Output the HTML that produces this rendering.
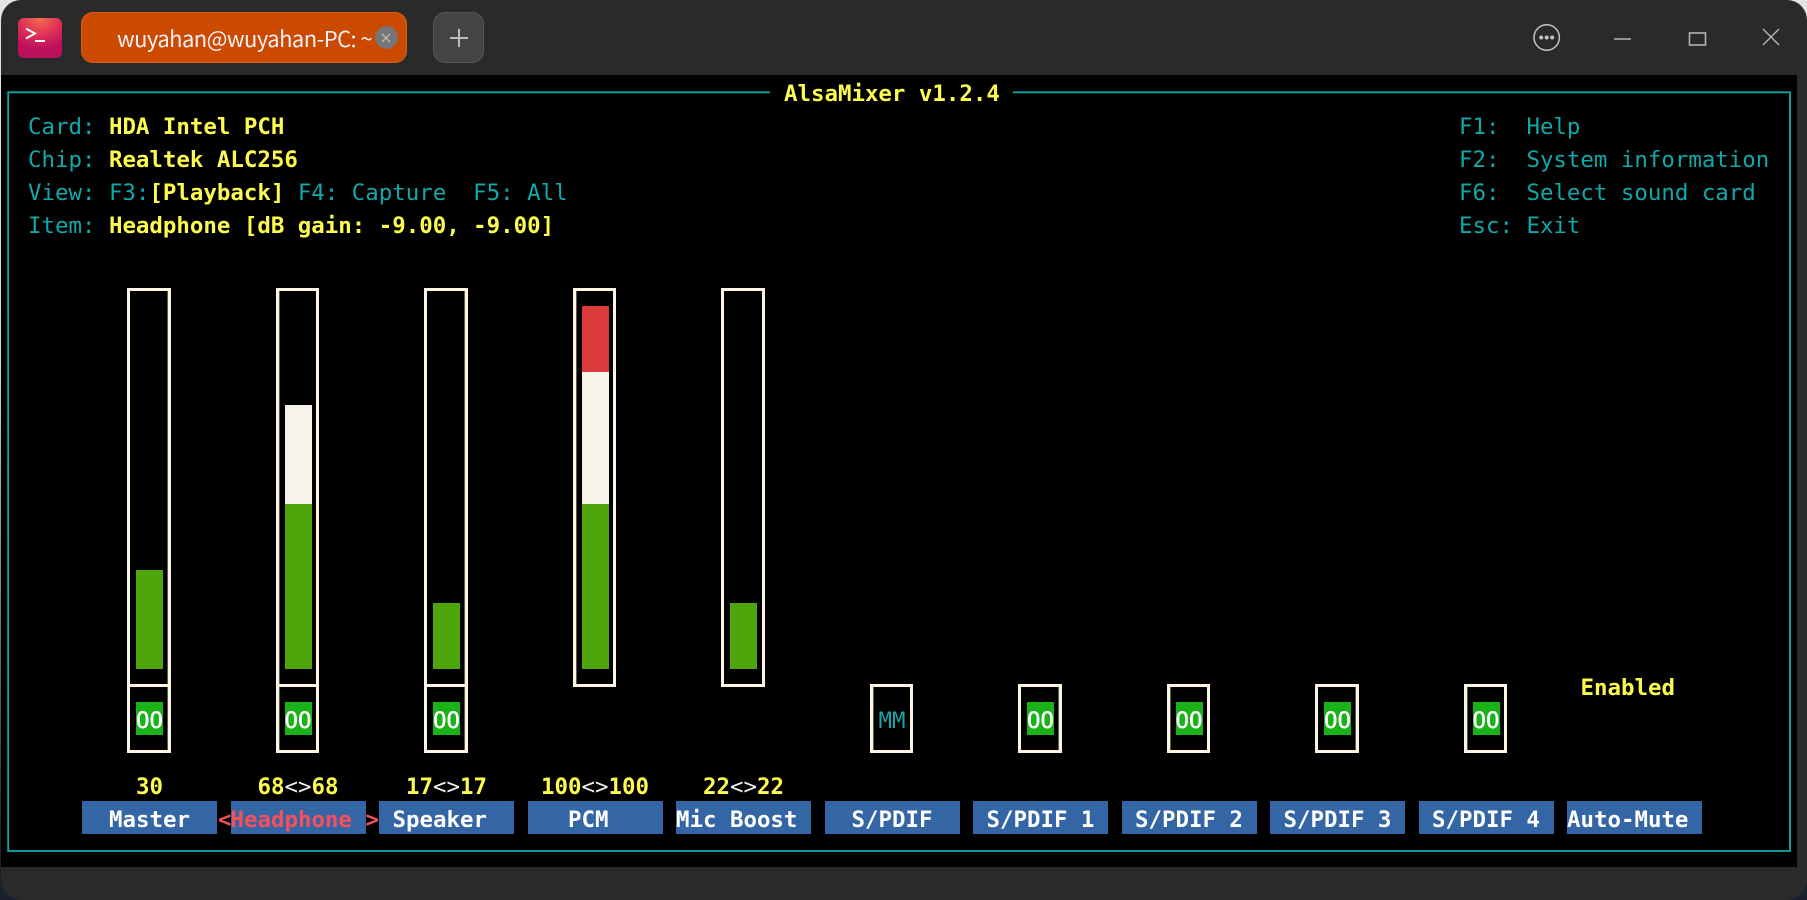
<!DOCTYPE html>
<html lang="en">
<head>
<meta charset="utf-8">
<title>AlsaMixer</title>
<style>
html,body{margin:0;padding:0;width:1807px;height:900px;overflow:hidden;background:linear-gradient(#e4e4e4 0,#d8d8d8 40%,#1a2030 95%)}
#win{position:absolute;left:1px;top:0;width:1806px;height:900px;background:#2a2a2a;border-radius:20px}
#term{position:absolute;left:1px;top:75px;width:1796px;height:792px;background:#000}
.a{position:absolute}
.t{position:absolute;margin-top:3px;height:33px;line-height:33px;font-family:"DejaVu Sans Mono","Liberation Mono",monospace;font-size:22.42px;white-space:pre}
.c{color:#11a8aa}
.y{color:#fdfc4e;font-weight:bold}
.w{color:#fff;font-weight:bold}
.r{color:#f8505a;font-weight:bold}
.g{color:#f4f0f0}
.o{color:#fff;-webkit-text-stroke:.45px #fff}
.box{position:absolute;box-sizing:border-box;width:43.5px;border:3px solid #fdf5e2}
.gl::before,.gr2::before{content:"";position:absolute;top:0;bottom:0;width:1px;background:#5c594f}
.gl::before{left:0}
.gr2::before{right:0}
.lab{position:absolute;top:801px;width:135px;height:33px;background:#3465a4}
.mg{position:absolute;top:702px;width:27px;height:33px;background:#19b219}
.gr{position:absolute;width:27px;background:#4ea60c}
.wh{position:absolute;width:27px;background:#f6f3e8}
.rd{position:absolute;width:27px;background:#dc3a3a}
svg{position:absolute;left:0;top:0}
</style>
</head>
<body>
<div id="win"></div>
<div id="term"></div>

<!-- app icon -->
<div class="a" style="left:18px;top:18px;width:44px;height:40px;border-radius:6px;background:radial-gradient(ellipse 36px 32px at 50% 0,#f46c4c 0,#e0305a 55%,#b9105a 100%)"></div>

<!-- tab -->
<div class="a" style="left:81px;top:12px;width:326px;height:51px;box-sizing:border-box;border:1px solid #dc5e14;border-radius:12px;background:#cc4a00"></div>
<div class="a" style="left:117px;top:12px;height:51px;line-height:52px;font-family:'Noto Sans CJK SC','Liberation Sans',sans-serif;font-size:22px;letter-spacing:-.55px;color:#f6f0f4;white-space:pre">wuyahan@wuyahan-PC: ~</div>
<div class="a" style="left:375px;top:26px;width:23px;height:23px;border-radius:50%;background:#767676"></div>

<!-- plus button -->
<div class="a" style="left:433px;top:12px;width:51px;height:51px;box-sizing:border-box;border:1px solid #555;border-radius:12px;background:#444"></div>

<svg width="1807" height="900" viewBox="0 0 1807 900" fill="none">
  <path d="M26 28.5 L35 33.5 L26 38.5" stroke="#fff" stroke-width="2"/>
  <path d="M35 41 H45" stroke="#fff" stroke-width="2"/>
  <path d="M382 34 L390 42 M390 34 L382 42" stroke="#c8c8c8" stroke-width="1.2"/>
  <path d="M450 38 H468 M459 29 V47" stroke="#bdbdc2" stroke-width="2"/>
  <circle cx="1546.7" cy="37.5" r="12.7" stroke="#c4c4c8" stroke-width="1.5"/>
  <circle cx="1541.2" cy="37.5" r="2" fill="#c4c4c8"/>
  <circle cx="1546.7" cy="37.5" r="2" fill="#c4c4c8"/>
  <circle cx="1552.2" cy="37.5" r="2" fill="#c4c4c8"/>
  <path d="M1614 39 H1631" stroke="#b4b4b8" stroke-width="1.6"/>
  <rect x="1689.5" y="33" width="16" height="12" stroke="#b4b4b8" stroke-width="1.6"/>
  <path d="M1763 29 L1779 45 M1779 29 L1763 45" stroke="#b4b4b8" stroke-width="1.4"/>
  <rect x="8.2" y="92.3" width="1781.8" height="758.7" stroke="#11a8aa" stroke-width="1.8"/>
</svg>

<!-- title -->
<div class="a" style="left:770px;top:85px;width:243px;height:14px;background:#000"></div>
<div class="t y" style="left:784px;top:75px">AlsaMixer v1.2.4</div>

<!-- header left -->
<div class="t c" style="left:28px;top:108px">Card: <span class="y">HDA Intel PCH</span></div>
<div class="t c" style="left:28px;top:141px">Chip: <span class="y">Realtek ALC256</span></div>
<div class="t c" style="left:28px;top:174px">View: F3:<span class="y">[Playback]</span> F4: Capture  F5: All</div>
<div class="t c" style="left:28px;top:207px">Item: <span class="y">Headphone [dB gain: -9.00, -9.00]</span></div>

<!-- header right -->
<div class="t c" style="left:1459px;top:108px">F1:  Help</div>
<div class="t c" style="left:1459px;top:141px">F2:  System information</div>
<div class="t c" style="left:1459px;top:174px">F6:  Select sound card</div>
<div class="t c" style="left:1459px;top:207px">Esc: Exit</div>

<!-- slider boxes -->
<div class="box gr2" style="left:127px;top:288px;height:399px"></div>
<div class="box gl" style="left:275.5px;top:288px;height:399px"></div>
<div class="box gr2" style="left:424px;top:288px;height:399px"></div>
<div class="box gl" style="left:572.5px;top:288px;height:399px"></div>
<div class="box" style="left:721px;top:288px;height:399px"></div>

<!-- mute boxes -->
<div class="box gr2" style="left:127px;top:684px;height:69px"></div>
<div class="box gl" style="left:275.5px;top:684px;height:69px"></div>
<div class="box gr2" style="left:424px;top:684px;height:69px"></div>
<div class="box gl" style="left:869.5px;top:684px;height:69px"></div>
<div class="box gr2" style="left:1018px;top:684px;height:69px"></div>
<div class="box gl" style="left:1166.5px;top:684px;height:69px"></div>
<div class="box gr2" style="left:1315px;top:684px;height:69px"></div>
<div class="box gl" style="left:1463.5px;top:684px;height:69px"></div>

<!-- level fills -->
<div class="gr" style="left:136px;top:570px;height:99px"></div>

<div class="wh" style="left:284.5px;top:405px;height:99px"></div>
<div class="gr" style="left:284.5px;top:504px;height:165px"></div>

<div class="gr" style="left:433px;top:603px;height:66px"></div>

<div class="rd" style="left:581.5px;top:306px;height:66px"></div>
<div class="wh" style="left:581.5px;top:372px;height:132px"></div>
<div class="gr" style="left:581.5px;top:504px;height:165px"></div>

<div class="gr" style="left:730px;top:603px;height:66px"></div>

<!-- mute states -->
<div class="mg" style="left:136px"></div><div class="t o" style="left:136px;top:702px">OO</div>
<div class="mg" style="left:284.5px"></div><div class="t o" style="left:284.5px;top:702px">OO</div>
<div class="mg" style="left:433px"></div><div class="t o" style="left:433px;top:702px">OO</div>
<div class="t c" style="left:878.5px;top:702px">MM</div>
<div class="mg" style="left:1027px"></div><div class="t o" style="left:1027px;top:702px">OO</div>
<div class="mg" style="left:1175.5px"></div><div class="t o" style="left:1175.5px;top:702px">OO</div>
<div class="mg" style="left:1324px"></div><div class="t o" style="left:1324px;top:702px">OO</div>
<div class="mg" style="left:1472.5px"></div><div class="t o" style="left:1472.5px;top:702px">OO</div>

<div class="t y" style="left:1580.5px;top:669px">Enabled</div>

<!-- values -->
<div class="t y" style="left:136px;top:768px">30</div>
<div class="t y" style="left:257.5px;top:768px">68<span class="g" style="font-weight:normal">&lt;&gt;</span>68</div>
<div class="t y" style="left:406px;top:768px">17<span class="g" style="font-weight:normal">&lt;&gt;</span>17</div>
<div class="t y" style="left:541px;top:768px">100<span class="g" style="font-weight:normal">&lt;&gt;</span>100</div>
<div class="t y" style="left:703px;top:768px">22<span class="g" style="font-weight:normal">&lt;&gt;</span>22</div>

<!-- labels -->
<div class="lab" style="left:82px"></div>
<div class="lab" style="left:230.5px"></div>
<div class="lab" style="left:379px"></div>
<div class="lab" style="left:527.5px"></div>
<div class="lab" style="left:676px"></div>
<div class="lab" style="left:824.5px"></div>
<div class="lab" style="left:973px"></div>
<div class="lab" style="left:1121.5px"></div>
<div class="lab" style="left:1270px"></div>
<div class="lab" style="left:1418.5px"></div>
<div class="lab" style="left:1567px"></div>

<div class="t w" style="left:109px;top:801px">Master</div>
<div class="t r" style="left:218px;top:801px">&lt;</div>
<div class="t r" style="left:230.5px;top:801px">Headphone</div>
<div class="t r" style="left:365.5px;top:801px">&gt;</div>
<div class="t w" style="left:392.5px;top:801px">Speaker</div>
<div class="t w" style="left:568px;top:801px">PCM</div>
<div class="t w" style="left:676px;top:801px">Mic Boost</div>
<div class="t w" style="left:851.5px;top:801px">S/PDIF</div>
<div class="t w" style="left:986.5px;top:801px">S/PDIF 1</div>
<div class="t w" style="left:1135px;top:801px">S/PDIF 2</div>
<div class="t w" style="left:1283.5px;top:801px">S/PDIF 3</div>
<div class="t w" style="left:1432px;top:801px">S/PDIF 4</div>
<div class="t w" style="left:1567px;top:801px">Auto-Mute</div>
</body>
</html>
